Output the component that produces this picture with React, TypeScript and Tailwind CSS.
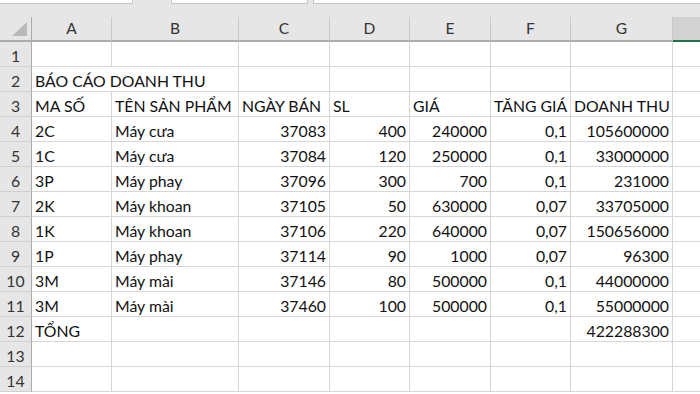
import React from 'react';

type Align = 'left' | 'right';

interface Cell {
  text?: string;
  align?: Align;
}

const COLS = ['A', 'B', 'C', 'D', 'E', 'F', 'G'];

// one entry per data row: A..G
const rows: (string | undefined)[][] = [
  [],
  ['BÁO CÁO DOANH THU'],
  ['MA SỐ', 'TÊN SẢN PHẨM', 'NGÀY BÁN', 'SL', 'GIÁ', 'TĂNG GIÁ', 'DOANH THU'],
  ['2C', 'Máy cưa', '37083', '400', '240000', '0,1', '105600000'],
  ['1C', 'Máy cưa', '37084', '120', '250000', '0,1', '33000000'],
  ['3P', 'Máy phay', '37096', '300', '700', '0,1', '231000'],
  ['2K', 'Máy khoan', '37105', '50', '630000', '0,07', '33705000'],
  ['1K', 'Máy khoan', '37106', '220', '640000', '0,07', '150656000'],
  ['1P', 'Máy phay', '37114', '90', '1000', '0,07', '96300'],
  ['3M', 'Máy mài', '37146', '80', '500000', '0,1', '44000000'],
  ['3M', 'Máy mài', '37460', '100', '500000', '0,1', '55000000'],
  ['TỔNG', undefined, undefined, undefined, undefined, undefined, '422288300'],
  [],
  [],
];

const gridCols = 'grid grid-cols-[32px_80px_127px_91px_80px_81px_80px_102px_1fr]';

const toCell = (value: string | undefined, rowIndex: number): Cell => {
  if (!value) return {};
  const numeric = rowIndex >= 3 && /^[0-9,]+$/.test(value);
  return { text: value, align: numeric ? 'right' : 'left' };
};

const DataCell: React.FC<{ cell: Cell; span?: boolean }> = ({ cell, span }) => (
  <div
    className={`h-[25px] border-r border-b border-[#d6d6d6] flex items-end pb-[1px] overflow-visible whitespace-nowrap ${
      cell.align === 'right' ? 'justify-end pr-[3px]' : 'justify-start pl-[3px]'
    } ${span ? 'col-span-2' : ''}`}
  >
    <span className="leading-[18px]">{cell.text}</span>
  </div>
);

export default function App() {
  return (
    <div className="w-[700px] h-[394px] overflow-hidden bg-white text-[15.8px] text-[#111] font-['Lato','Liberation_Sans',sans-serif]">
      {/* formula bar strip */}
      <div className="h-[17px] bg-[#e6e6e6] flex items-start">
        <div className="w-[133px] h-[4px] bg-white border-r border-b border-[#c6c6c6]" />
        <div className="ml-[38px] w-[137px] h-[4px] bg-white border-x border-b border-[#c6c6c6]" />
        <div className="ml-[5px] flex-1 h-[4px] bg-white border-l border-b border-[#c6c6c6]" />
      </div>

      {/* column headers */}
      <div className={`${gridCols} h-[25px] bg-[#e6e6e6] text-[15.5px] text-[#333]`}>
        <div className="relative border-r border-b-2 border-[#ababab]">
          <div className="absolute right-[4px] bottom-[4px] w-0 h-0 border-l-[15px] border-l-transparent border-b-[14px] border-b-[#b9b9b9]" />
        </div>
        {COLS.map((c) => (
          <div
            key={c}
            className="flex items-center justify-center border-r border-r-[#c8c8c8] border-b-2 border-b-[#ababab] leading-none"
          >
            {c}
          </div>
        ))}
        <div className="bg-[#d2d2d2] border-b-2 border-b-[#217346]" />
      </div>

      {/* rows */}
      {rows.map((row, r) => {
        const cells = COLS.map((_, c) => toCell(row[c], r));
        return (
          <div key={r} className={`${gridCols}`}>
            <div className="h-[25px] bg-[#e6e6e6] border-r border-r-[#ababab] border-b border-b-[#d0d0d0] flex items-end justify-center pb-[1px] text-[#333]">
              <span className="leading-[18px]">{r + 1}</span>
            </div>
            {r === 1 ? (
              <>
                <DataCell cell={cells[0]} span />
                {cells.slice(2).map((cell, c) => (
                  <DataCell key={c} cell={cell} />
                ))}
              </>
            ) : (
              cells.map((cell, c) => <DataCell key={c} cell={cell} />)
            )}
            <div className="h-[25px] border-b border-[#d6d6d6]" />
          </div>
        );
      })}
    </div>
  );
}
